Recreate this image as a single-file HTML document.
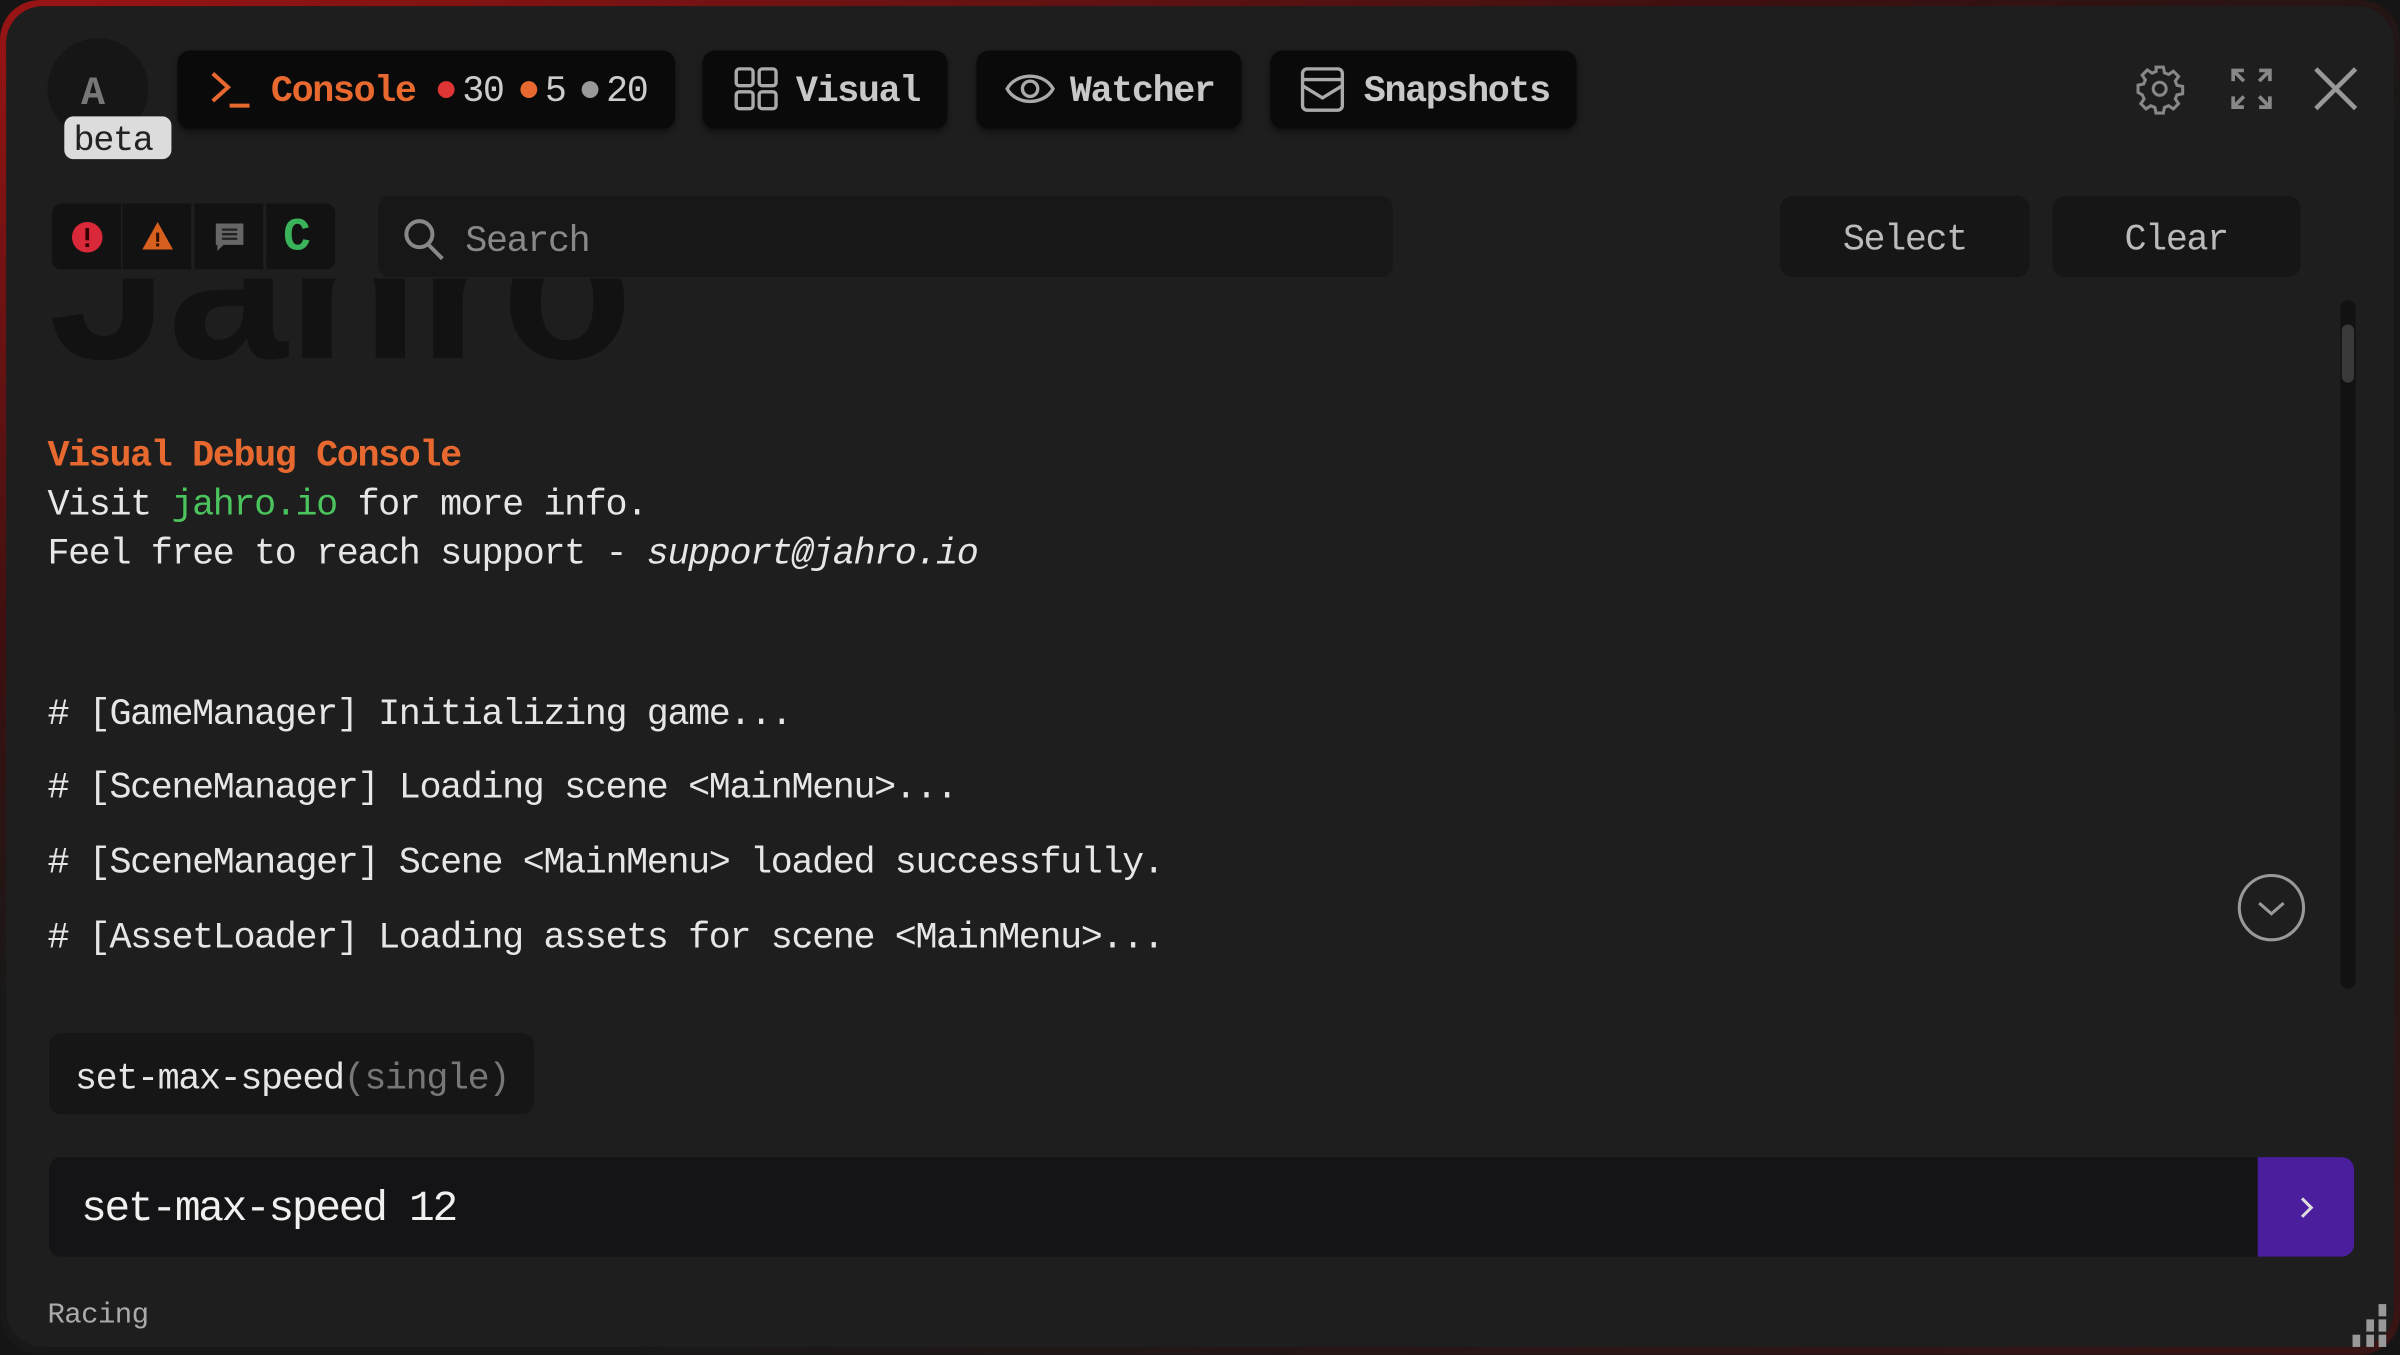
<!DOCTYPE html>
<html><head><meta charset="utf-8"><style>
*{margin:0;padding:0;box-sizing:border-box}
html,body{width:2400px;height:1354px;overflow:hidden;background:#151515}
#stage{position:absolute;left:0;top:0;width:1568px;height:885px;transform:scale(1.530612);transform-origin:0 0;font-family:"Liberation Mono","DejaVu Sans Mono",monospace}
.frame{position:absolute;left:0;top:0;width:1568px;height:885px;border-radius:26px;background:linear-gradient(160deg,#9a1414 0%,#3a1010 30%,#181818 45%,#181818 70%,#3a1414 100%)}
.win{position:absolute;left:4px;top:4px;width:1560px;height:876px;border-radius:24px;background:#1e1e1e;overflow:hidden}
.a{position:absolute}
.t{position:absolute;white-space:pre;font-size:24px;letter-spacing:-0.9px;color:#e6e6e6;line-height:30px;margin-top:3px}
.tab{position:absolute;top:33px;height:51px;background:#0a0a0a;border-radius:8px;box-shadow:0 2px 4px rgba(0,0,0,.5)}
.tab .t{top:10px;font-weight:bold;color:#c8c8c8}
.btn{position:absolute;top:128px;height:53px;background:#161616;border-radius:8px}
.cell{position:absolute;top:133px;height:43px;width:45px;background:#121212}
</style></head><body><div id="stage">
<div class="frame"></div>
<div class="win"></div>
<!-- avatar -->
<div class="a" style="left:31px;top:25px;width:66px;height:66px;border-radius:50%;background:#161616"></div>
<div class="t" style="left:53px;top:43px;font-weight:bold;color:#777;font-size:26px">A</div>
<div class="a" style="left:42px;top:76px;width:70px;height:28px;border-radius:6px;background:#dcdcdc"></div>
<div class="t" style="left:48px;top:75px;color:#222;font-size:23px;line-height:28px">beta</div>
<!-- tabs -->
<div class="tab" style="left:116px;width:325px">
 <svg class="a" style="left:20px;top:12px" width="30" height="28" viewBox="0 0 30 28"><path d="M3 3 L13 12 L3 21" fill="none" stroke="#e8692f" stroke-width="2.6"/><path d="M14 24 H27" stroke="#e8692f" stroke-width="2.6"/></svg>
 <div class="t" style="left:61px;color:#e8692f">Console</div>
 <div class="a" style="left:170px;top:20px;width:11px;height:11px;border-radius:50%;background:#e03535"></div>
 <div class="t" style="left:186px;font-weight:normal;color:#ccc">30</div>
 <div class="a" style="left:224px;top:20px;width:11px;height:11px;border-radius:50%;background:#e8692f"></div>
 <div class="t" style="left:240px;font-weight:normal;color:#ccc">5</div>
 <div class="a" style="left:264px;top:20px;width:11px;height:11px;border-radius:50%;background:#999"></div>
 <div class="t" style="left:280px;font-weight:normal;color:#ccc">20</div>
</div>
<div class="tab" style="left:459px;width:160px">
 <svg class="a" style="left:20px;top:10px" width="30" height="30" viewBox="0 0 30 30" fill="none" stroke="#aaa" stroke-width="2.2"><rect x="2" y="2" width="11" height="11" rx="2"/><rect x="17" y="2" width="11" height="11" rx="2"/><rect x="2" y="17" width="11" height="11" rx="2"/><rect x="17" y="17" width="11" height="11" rx="2"/></svg>
 <div class="t" style="left:61px">Visual</div>
</div>
<div class="tab" style="left:638px;width:173px">
 <svg class="a" style="left:18px;top:11px" width="34" height="28" viewBox="0 0 34 28" fill="none" stroke="#aaa" stroke-width="2.2"><path d="M2 14 C8 3 26 3 32 14 C26 25 8 25 2 14Z"/><circle cx="17" cy="14" r="5"/></svg>
 <div class="t" style="left:61px">Watcher</div>
</div>
<div class="tab" style="left:830px;width:200px">
 <svg class="a" style="left:19px;top:10px" width="30" height="31" viewBox="0 0 30 31" fill="none" stroke="#aaa" stroke-width="2.2"><rect x="2" y="2" width="26" height="27" rx="3"/><path d="M2 9 H28"/><path d="M2 13 L15 21 L28 13"/></svg>
 <div class="t" style="left:61px">Snapshots</div>
</div>
<!-- right icons -->
<svg class="a" style="left:1394px;top:41px" width="34" height="34" viewBox="0 0 24 24" fill="none" stroke="#888" stroke-width="1.4"><path d="M10.3 2h3.4l.5 2.6 1.9.8 2.2-1.5 2.4 2.4-1.5 2.2.8 1.9 2.6.5v3.4l-2.6.5-.8 1.9 1.5 2.2-2.4 2.4-2.2-1.5-1.9.8-.5 2.6h-3.4l-.5-2.6-1.9-.8-2.2 1.5-2.4-2.4 1.5-2.2-.8-1.9L2 13.7v-3.4l2.6-.5.8-1.9-1.5-2.2 2.4-2.4 2.2 1.5 1.9-.8z"/><circle cx="12" cy="12" r="3"/></svg>
<svg class="a" style="left:1456px;top:43px" width="30" height="30" viewBox="0 0 30 30" fill="none" stroke="#888" stroke-width="2.4"><path d="M3 10V3h7M3 3l7 7M27 10V3h-7M27 3l-7 7M3 20v7h7M3 27l7-7M27 20v7h-7M27 27l-7-7"/></svg>
<svg class="a" style="left:1510px;top:42px" width="32" height="32" viewBox="0 0 32 32" stroke="#999" stroke-width="3"><path d="M3 3L29 29M29 3L3 29"/></svg>
<!-- filter cells -->
<div class="cell" style="left:34px;border-radius:6px 0 0 6px"><svg class="a" style="left:12px;top:11px" width="22" height="22"><circle cx="11" cy="11" r="10" fill="#d8283a"/><rect x="9.8" y="5" width="2.4" height="8" fill="#300"/><rect x="9.8" y="15" width="2.4" height="2.4" fill="#300"/></svg></div>
<div class="cell" style="left:80px"><svg class="a" style="left:12px;top:11px" width="22" height="20"><path d="M11 1L21 19H1Z" fill="#d8601f"/><rect x="10" y="8" width="2" height="6" fill="#301000"/><rect x="10" y="15" width="2" height="2" fill="#301000"/></svg></div>
<div class="cell" style="left:127px"><svg class="a" style="left:12px;top:11px" width="22" height="22"><path d="M2 2H20V16H7L3 20V16H2Z" fill="#666"/><path d="M6 6H16M6 9H16M6 12H16" stroke="#222" stroke-width="1.5"/></svg></div>
<div class="cell" style="left:174px;border-radius:0 6px 6px 0"><div class="t" style="left:11px;top:5px;font-size:30px;font-weight:bold;color:#3bb35a">C</div></div>
<!-- watermark -->
<div class="a" style="left:0;top:182px;width:700px;height:72px;overflow:hidden">
 <div style="position:absolute;left:32px;top:-66px;font-family:'Liberation Sans',sans-serif;font-weight:bold;font-size:140px;color:#121212;line-height:140px;white-space:pre">Jahro</div>
</div>
<!-- search -->
<div class="a" style="left:247px;top:128px;width:663px;height:53px;border-radius:8px;background:#171717"></div>
<svg class="a" style="left:262px;top:141px" width="30" height="30" viewBox="0 0 30 30" fill="none" stroke="#888" stroke-width="2.6"><circle cx="12" cy="12" r="8.5"/><path d="M18 19L27 28"/></svg>
<div class="t" style="left:304px;top:141px;color:#888">Search</div>
<div class="btn" style="left:1163px;width:163px"><div class="t" style="left:41px;top:12px;color:#bbb">Select</div></div>
<div class="btn" style="left:1341px;width:162px"><div class="t" style="left:47px;top:12px;color:#bbb">Clear</div></div>
<!-- content -->
<div class="t" style="left:31px;top:281px;color:#e8692f;font-weight:bold">Visual Debug Console</div>
<div class="t" style="left:31px;top:313px">Visit <span style="color:#4cc45e">jahro.io</span> for more info.</div>
<div class="t" style="left:31px;top:345px">Feel free to reach support - <i>support@jahro.io</i></div>
<div class="t" style="left:31px;top:450px"># [GameManager] Initializing game...</div>
<div class="t" style="left:31px;top:498px"># [SceneManager] Loading scene &lt;MainMenu&gt;...</div>
<div class="t" style="left:31px;top:547px"># [SceneManager] Scene &lt;MainMenu&gt; loaded successfully.</div>
<div class="t" style="left:31px;top:596px"># [AssetLoader] Loading assets for scene &lt;MainMenu&gt;...</div>
<!-- scroll -->
<div class="a" style="left:1529px;top:196px;width:10px;height:450px;border-radius:5px;background:#121212"></div>
<div class="a" style="left:1530px;top:212px;width:8px;height:38px;border-radius:4px;background:#3a3a3a"></div>
<svg class="a" style="left:1461px;top:570px" width="46" height="46" viewBox="0 0 46 46" fill="none" stroke="#999" stroke-width="2"><circle cx="23" cy="23" r="21"/><path d="M15 20L23 27L31 20"/></svg>
<!-- suggestion -->
<div class="a" style="left:32px;top:675px;width:317px;height:53px;border-radius:8px;background:#161616"></div>
<div class="t" style="left:49px;top:688px">set-max-speed<span style="color:#777">(single)</span></div>
<!-- input -->
<div class="a" style="left:32px;top:756px;width:1506px;height:65px;border-radius:8px;background:#141416"></div>
<div class="a" style="left:1475px;top:756px;width:63px;height:65px;border-radius:0 8px 8px 0;background:#4a1e9c"></div>
<svg class="a" style="left:1500px;top:780px" width="14" height="18" viewBox="0 0 14 18" fill="none" stroke="#ddd" stroke-width="2"><path d="M4 3L10 9L4 15"/></svg>
<div class="t" style="left:53px;top:771px;font-size:28px;letter-spacing:-1.5px;line-height:34px;color:#f0f0f0">set-max-speed 12</div>
<div class="t" style="left:31px;top:845px;font-size:19px;letter-spacing:-0.4px;line-height:22px;color:#aaa">Racing</div>
<!-- grip -->
<div class="a" style="left:1554px;top:852px;width:5px;height:8px;background:#999"></div>
<div class="a" style="left:1546px;top:862px;width:5px;height:8px;background:#999"></div>
<div class="a" style="left:1554px;top:862px;width:5px;height:8px;background:#999"></div>
<div class="a" style="left:1537px;top:872px;width:5px;height:8px;background:#999"></div>
<div class="a" style="left:1546px;top:872px;width:5px;height:8px;background:#999"></div>
<div class="a" style="left:1554px;top:872px;width:5px;height:8px;background:#999"></div>
</div></body></html>
